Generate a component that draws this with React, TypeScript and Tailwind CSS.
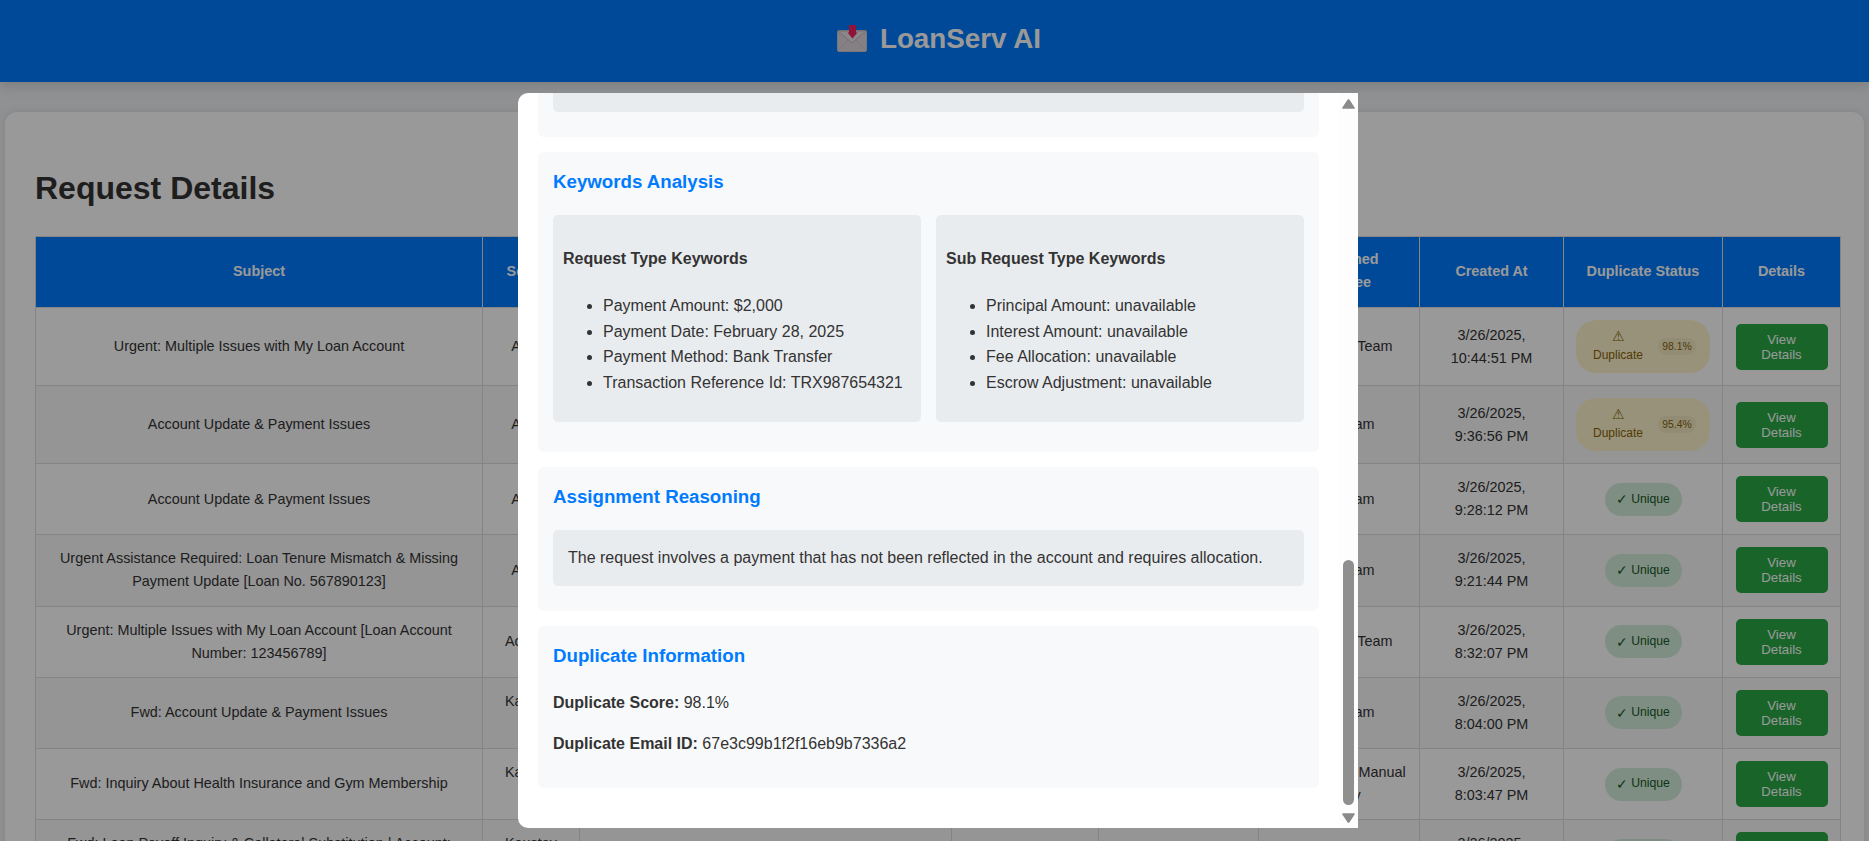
import React from "react";

type Row = {
  subject: string;
  sender: string;
  type?: string;
  assignee: string;
  date: string;
  time: string;
  score?: string;
};

const rows: Row[] = [
  { subject: "Urgent: Multiple Issues with My Loan Account", sender: "Ayush", assignee: "Loan Audit Team", date: "3/26/2025,", time: "10:44:51 PM", score: "98.1%" },
  { subject: "Account Update & Payment Issues", sender: "Ayush", assignee: "Loan Team", date: "3/26/2025,", time: "9:36:56 PM", score: "95.4%" },
  { subject: "Account Update & Payment Issues", sender: "Ayush", assignee: "Loan Team", date: "3/26/2025,", time: "9:28:12 PM" },
  { subject: "Urgent Assistance Required: Loan Tenure Mismatch & Missing Payment Update [Loan No. 567890123]", sender: "Ayush", assignee: "Loan Team", date: "3/26/2025,", time: "9:21:44 PM" },
  { subject: "Urgent: Multiple Issues with My Loan Account [Loan Account Number: 123456789]", sender: "Account", assignee: "Loan Audit Team", date: "3/26/2025,", time: "8:32:07 PM" },
  { subject: "Fwd: Account Update & Payment Issues", sender: "Kaustav Das", assignee: "Loan Team", date: "3/26/2025,", time: "8:04:00 PM" },
  { subject: "Fwd: Inquiry About Health Insurance and Gym Membership", sender: "Kaustav Das", assignee: "Escalation to Manual Inquiry", date: "3/26/2025,", time: "8:03:47 PM" },
  { subject: "Fwd: Loan Payoff Inquiry & Collateral Substitution | Account: 987654321", sender: "Kaustav Das", type: "Loan", assignee: "Loan Team", date: "3/26/2025,", time: "7:58:12 PM" },
];

const headers = ["Subject", "Sender", "Summary", "Request Type", "Sub Request Type", "Determined Assignee", "Created At", "Duplicate Status", "Details"];
const widths = [447, 97, 372, 147, 160, 161, 144, 159, 118];

function MailIcon() {
  return (
    <svg width="30" height="27" viewBox="0 0 30 27" className="shrink-0">
      <rect x="0.5" y="5.5" width="29" height="21" rx="1.5" fill="#ddd5dd" stroke="#cbc3cb" />
      <path d="M1 6 L15 18 L29 6 Z" fill="#e8e1e8" stroke="#bfb6bf" strokeWidth="1" />
      <path d="M1 26 L11 15 M29 26 L19 15" fill="none" stroke="#ccc4cc" strokeWidth="1" />
      <path d="M12 0 H19 V7.5 H20.5 L15.5 13.5 L10.5 7.5 H12 Z" fill="#f02060" />
    </svg>
  );
}

function DuplicateBadge({ score }: { score: string }) {
  return (
    <div className="mx-auto flex h-[53px] w-[134px] items-center justify-between rounded-[20px] bg-[#fff3cd] px-[14px] text-[12px] leading-[19px] text-[#856404]">
      <div className="flex w-[56px] flex-col items-center">
        <span className="-mt-[1px] text-[14px] leading-[19px]">⚠</span>
        <span>Duplicate</span>
      </div>
      <span className="flex h-[17px] w-[38px] items-center justify-center rounded-[8px] bg-black/[0.04] text-[10.4px]">{score}</span>
    </div>
  );
}

function UniqueBadge() {
  return (
    <div className="mx-auto flex h-[33px] w-[77px] items-center justify-center gap-[3px] rounded-[17px] bg-[#d4edda] text-[12.2px] text-[#155724]">
      <span className="text-[14px] leading-none">✓</span>
      <span>Unique</span>
    </div>
  );
}

function KeywordBox({ title, items }: { title: string; items: string[] }) {
  return (
    <div className="h-[207px] flex-1 rounded-[5px] bg-[#e9ecef] px-[10px] pt-[34px]">
      <h4 className="text-[16px] font-bold leading-[20px] text-[#333]">{title}</h4>
      <ul className="mt-[24px] list-disc pl-[40px] text-[16px] leading-[25.7px] text-[#333]">
        {items.map((t) => (
          <li key={t}>{t}</li>
        ))}
      </ul>
    </div>
  );
}

function SectionTitle({ children, className }: { children: React.ReactNode; className: string }) {
  return <h3 className={`text-[18.7px] font-bold leading-[29px] text-[#007bff] ${className}`}>{children}</h3>;
}

export default function App() {
  return (
    <div className="relative h-screen overflow-hidden bg-[#f0f2f5] font-['Liberation_Sans',Arial,sans-serif] text-[#333]">
      <header className="flex h-[82px] items-center justify-center gap-[13px] bg-[#007bff] pb-[5px] pl-[9px] shadow-[0_4px_12px_rgba(0,0,0,0.15)]">
        <MailIcon />
        <span className="text-[27.8px] font-bold text-white">LoanServ AI</span>
      </header>

      <main className="mx-[5px] mt-[30px] rounded-[12px] bg-white pb-[30px] pl-[30px] pr-[24px] pt-[58px] shadow-[0_0_10px_rgba(0,0,0,0.1)]">
        <h1 className="mb-[29px] text-[32px] font-bold leading-[37px] text-[#333]">Request Details</h1>
        <table className="w-[1805px] table-fixed border-collapse text-center text-[14.4px] leading-[23.1px]">
          <colgroup>
            {widths.map((w, i) => (
              <col key={i} style={{ width: w }} />
            ))}
          </colgroup>
          <thead>
            <tr>
              {headers.map((h) => (
                <th key={h} className="border border-[#ddd] bg-[#007bff] px-[12px] pb-[13px] pt-[11px] font-bold text-white">
                  {h}
                </th>
              ))}
            </tr>
          </thead>
          <tbody>
            {rows.map((r, i) => (
              <tr key={i} className="even:bg-[#f8f9fa]">
                <td className="border border-[#ddd] p-[12px]">{r.subject}</td>
                <td className="border border-[#ddd] p-[12px]">{r.sender}</td>
                <td className="border border-[#ddd] p-[12px]"></td>
                <td className="border border-[#ddd] p-[12px]">{r.type}</td>
                <td className="border border-[#ddd] p-[12px]"></td>
                <td className="border border-[#ddd] p-[12px]">{r.assignee}</td>
                <td className="border border-[#ddd] p-[12px]">
                  {r.date}
                  <br />
                  {r.time}
                </td>
                <td className="border border-[#ddd] p-[12px]">
                  {r.score ? <DuplicateBadge score={r.score} /> : <UniqueBadge />}
                </td>
                <td className="border border-[#ddd] p-[12px]">
                  <button className="mx-auto block h-[46px] w-[92px] rounded-[5px] bg-[#28a745] text-[13.2px] leading-[15px] text-white">
                    View
                    <br />
                    Details
                  </button>
                </td>
              </tr>
            ))}
          </tbody>
        </table>
      </main>

      <div className="absolute inset-0 bg-black/40 pl-[518px] pt-[93px]">
        <div className="flex h-[735px] w-[840px] overflow-hidden rounded-l-[10px] bg-white">
          <div className="flex flex-1 flex-col gap-[15px] overflow-hidden px-[20px]">
            <section className="rounded-b-[6px] bg-[#f8f9fa] px-[15px] pb-[25px]">
              <div className="h-[19px] rounded-b-[5px] bg-[#e9ecef]" />
            </section>

            <section className="rounded-[6px] bg-[#f8f9fa] p-[15px] pb-[30px]">
              <SectionTitle className="mb-[19px]">Keywords Analysis</SectionTitle>
              <div className="flex gap-[15px]">
                <KeywordBox
                  title="Request Type Keywords"
                  items={["Payment Amount: $2,000", "Payment Date: February 28, 2025", "Payment Method: Bank Transfer", "Transaction Reference Id: TRX987654321"]}
                />
                <KeywordBox
                  title="Sub Request Type Keywords"
                  items={["Principal Amount: unavailable", "Interest Amount: unavailable", "Fee Allocation: unavailable", "Escrow Adjustment: unavailable"]}
                />
              </div>
            </section>

            <section className="rounded-[6px] bg-[#f8f9fa] p-[15px] pb-[25px]">
              <SectionTitle className="mb-[19px]">Assignment Reasoning</SectionTitle>
              <div className="flex h-[56px] items-center rounded-[5px] bg-[#e9ecef] px-[15px] text-[16px]">
                The request involves a payment that has not been reflected in the account and requires allocation.
              </div>
            </section>

            <section className="h-[162px] rounded-[6px] bg-[#f8f9fa] p-[15px]">
              <SectionTitle className="mb-[23px]">Duplicate Information</SectionTitle>
              <p className="mb-[21px] text-[16px] leading-[20px]">
                <strong className="font-bold">Duplicate Score:</strong> 98.1%
              </p>
              <p className="text-[16px] leading-[20px]">
                <strong className="font-bold">Duplicate Email ID:</strong> 67e3c99b1f2f16eb9b7336a2
              </p>
            </section>
          </div>

          <div className="flex w-[19px] shrink-0 flex-col items-center bg-[#fdfdfd] pb-[5px] pt-[6px]">
            <svg width="13" height="10" viewBox="0 0 13 10" className="shrink-0">
              <path d="M5.6 0.6 Q6.5 -0.2 7.4 0.6 L12.6 8.4 Q13.1 9.8 12 9.8 H1 Q-0.1 9.8 0.4 8.4 Z" fill="#8a8a8a" />
            </svg>
            <div className="flex-1" />
            <div className="h-[245px] w-[11px] shrink-0 rounded-[5.5px] bg-[#8f8f8f]" />
            <svg width="13" height="10" viewBox="0 0 13 10" className="mt-[8px] shrink-0">
              <path d="M5.6 9.4 Q6.5 10.2 7.4 9.4 L12.6 1.6 Q13.1 0.2 12 0.2 H1 Q-0.1 0.2 0.4 1.6 Z" fill="#8a8a8a" />
            </svg>
          </div>
        </div>
      </div>
    </div>
  );
}
